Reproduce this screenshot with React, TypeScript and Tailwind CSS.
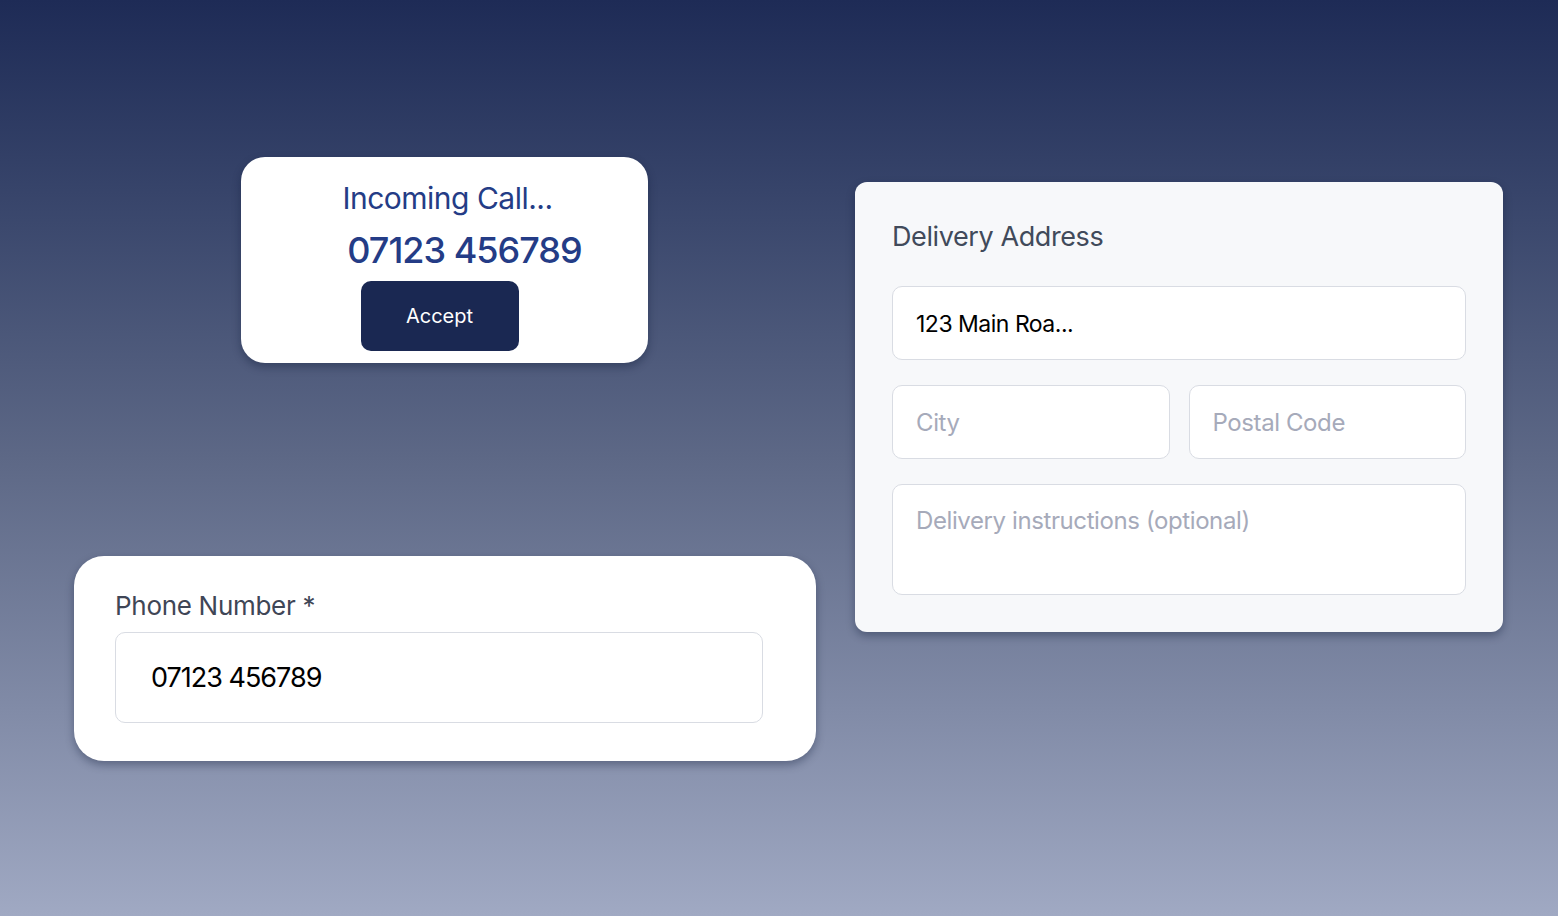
const font = "font-['Inter','Noto_Sans',sans-serif]"

/* COMPONENT */
export default function App() {
    return (
        <div className={`relative h-[916px] w-full overflow-hidden bg-gradient-to-b from-[#1e2b56] via-[#5d6886] to-[#a0a9c3] ${font}`}>
            {/* INCOMING CALL */}
            <div className="absolute left-[241px] top-[157px] w-[407px] h-[206px] bg-white rounded-[24px] shadow-[0_4px_8px_rgba(10,20,50,0.35)] flex flex-col items-center pt-[22px]">
                <h2 className="text-[30px] leading-[38px] text-[#243c86] tracking-[-0.5px] ml-[6px]">Incoming Call...</h2>
                <p className="text-[36px] leading-[46px] font-medium text-[#243c86] tracking-[-1px] mt-[10px] ml-[40px]">07123 456789</p>
                <button className="mt-[8px] w-[158px] h-[70px] rounded-[10px] bg-[#1a2852] text-white text-[20px] mr-[10px]">Accept</button>
            </div>

            {/* PHONE NUMBER */}
            <div className="absolute left-[74px] top-[556px] w-[742px] h-[205px] bg-white rounded-[30px] shadow-[0_4px_8px_rgba(10,20,50,0.35)] pl-[41px] pr-[53px] pt-[33px]">
                <label className="block text-[26px] leading-[34px] text-[#3f4656] tracking-[-0.3px]">Phone Number *</label>
                <div className="mt-[9px] h-[91px] rounded-[10px] border border-[#d9dce3] flex items-center pl-[35px] pt-[2px] text-[27px] text-black tracking-[-1px]">
                    07123 456789
                </div>
            </div>

            {/* DELIVERY ADDRESS */}
            <div className="absolute left-[855px] top-[182px] w-[648px] h-[450px] bg-[#f7f8fa] rounded-[12px] shadow-[0_4px_8px_rgba(10,20,50,0.35)] px-[37px] pt-[38px]">
                <h3 className="text-[27px] leading-[34px] text-[#414a5a] tracking-[-0.4px]">Delivery Address</h3>
                <div className="mt-[32px] flex flex-col gap-[25px]">
                    <div className="h-[74px] bg-white rounded-[10px] border border-[#d9dce3] flex items-center px-[23px] pt-[2px] text-[23px] text-black tracking-[-0.5px]">123 Main Roa...</div>
                    <div className="grid grid-cols-2 gap-[19px]">
                        <div className="h-[74px] bg-white rounded-[10px] border border-[#d9dce3] flex items-center px-[23px] pt-[2px] text-[24px] text-[#a6aaba] tracking-[-0.4px]">City</div>
                        <div className="h-[74px] bg-white rounded-[10px] border border-[#d9dce3] flex items-center px-[23px] pt-[2px] text-[24px] text-[#a6aaba] tracking-[-0.4px]">Postal Code</div>
                    </div>
                    <div className="h-[111px] bg-white rounded-[10px] border border-[#d9dce3] px-[23px] pt-[21px] text-[24px] leading-[30px] text-[#a6aaba] tracking-[-0.4px]">Delivery instructions (optional)</div>
                </div>
            </div>
        </div>
    )
}
